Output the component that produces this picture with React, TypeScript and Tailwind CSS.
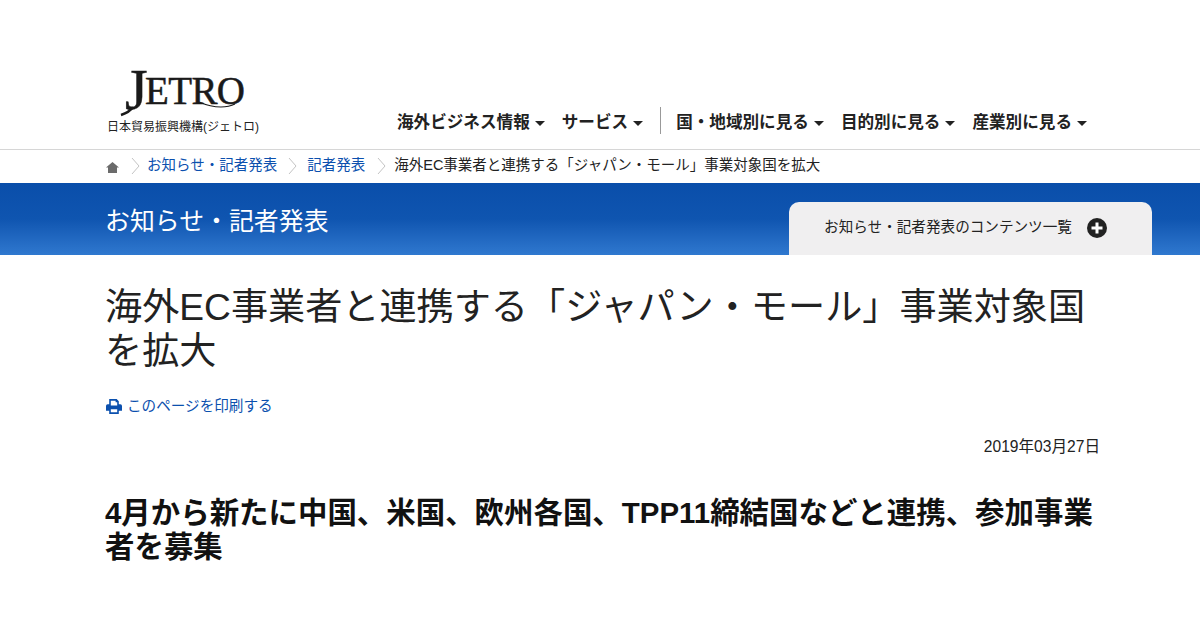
import React from "react";

const cjk = "font-['Liberation_Sans','Noto_Sans_CJK_JP',sans-serif]";

function Caret() {
  return <span className="ml-[5px] inline-block h-0 w-0 border-x-[5px] border-t-[5px] border-x-transparent border-t-[#222]" />;
}

function Chevron() {
  return (
    <svg width="9" height="18" viewBox="0 0 9 18" className="shrink-0">
      <path d="M1 1l7 8-7 8" fill="none" stroke="#c4c4c4" strokeWidth="1" />
    </svg>
  );
}

function NavItem({ label }: { label: string }) {
  return (
    <span className="flex items-center whitespace-nowrap text-[16.6px] font-bold leading-[24px] text-[#222]">
      {label}
      <Caret />
    </span>
  );
}

function Logo() {
  return (
    <svg width="140" height="50" viewBox="0 0 140 50" className="block overflow-visible">
      <g fill="#1a1a1a" stroke="#1a1a1a" strokeWidth="0.5" fontFamily="'Liberation Serif', serif">
        <text x="10" y="41" fontSize="58">J</text>
        <text x="30" y="36" fontSize="39" textLength="100" lengthAdjust="spacing">ETRO</text>
      </g>
      <path d="M18 39C16 42 12 45 6 47" fill="none" stroke="#1a1a1a" strokeWidth="2.500" />
      <path d="M84 34C91 37 98 39 106 39C112 39 116 38 120 36" fill="none" stroke="#1a1a1a" strokeWidth="1.200" />
    </svg>
  );
}

export default function App() {
  return (
    <div className={`h-[630px] w-[1200px] overflow-hidden bg-white ${cjk} text-[#222]`}>
      <header className="flex h-[150px] border-b border-[#d6d6d6] pl-[106px]">
        <div className="w-[291px] pt-[68px]">
          <div className="ml-[9px] h-[50px]">
            <Logo />
          </div>
          <div className="ml-px mt-[1px] whitespace-nowrap text-[12px] leading-[16px]">日本貿易振興機構(ジェトロ)</div>
        </div>
        <nav className="flex h-[149px] items-start pt-[107px]">
          <div className="flex h-[27px] items-center gap-[17px] pt-[5px]">
            <NavItem label="海外ビジネス情報" />
            <NavItem label="サービス" />
          </div>
          <div className="ml-[17px] mr-[15px] h-[27px] w-px bg-[#999]" />
          <div className="flex h-[27px] items-center gap-[17px] pt-[5px]">
            <NavItem label="国・地域別に見る" />
            <NavItem label="目的別に見る" />
            <NavItem label="産業別に見る" />
          </div>
        </nav>
      </header>

      <div className="flex h-[33px] items-center pb-[4px] pl-[106px] text-[14.500px] leading-[20px]">
        <svg width="13" height="11" viewBox="0 0 13 11" className="mt-[6px] shrink-0">
          <path d="M6.500 0L13 5.500H11V11H2V5.500H0L6.500 0Z" fill="#6b6b6b" />
        </svg>
        <span className="ml-[12px] mr-[7px] mt-[2px] flex"><Chevron /></span>
        <span className="text-[#0b50ae]">お知らせ・記者発表</span>
        <span className="ml-[11px] mr-[10px] mt-[2px] flex"><Chevron /></span>
        <span className="text-[#0b50ae]">記者発表</span>
        <span className="ml-[12px] mr-[8px] mt-[2px] flex"><Chevron /></span>
        <span className="whitespace-nowrap">海外EC事業者と連携する「ジャパン・モール」事業対象国を拡大</span>
      </div>

      <div className="flex h-[72px] items-start justify-between bg-gradient-to-b from-[#0a4eaa] via-[#0f55b0] to-[#2f78cf] pl-[105px] pr-[48px]">
        <div className="pt-[23px] text-[24.900px] leading-[30px] text-white">お知らせ・記者発表</div>
        <div className="mt-[19px] flex h-[53px] w-[363px] items-start justify-center gap-[15px] rounded-t-[10px] bg-[#f0eff0] pr-[10px] pt-[13px]">
          <span className="whitespace-nowrap text-[14.600px] leading-[24px]">お知らせ・記者発表のコンテンツ一覧</span>
          <svg width="20" height="20" viewBox="0 0 20 20" className="mt-[3px] shrink-0">
            <circle cx="10" cy="10" r="10" fill="#222" />
            <path d="M10 4.500v11M4.500 10h11" stroke="#fff" strokeWidth="3" />
          </svg>
        </div>
      </div>

      <main className="px-[105px]">
        <h1 className="whitespace-nowrap pt-[30px] text-[37.150px] font-normal leading-[44px] text-[#222]">
          海外EC事業者と連携する「ジャパン・モール」事業対象国
          <br />
          を拡大
        </h1>
        <div className="ml-px mt-[23px] flex items-center gap-[5px] text-[14.600px] leading-[20px] text-[#0b50ae]">
          <svg width="16" height="15" viewBox="0 0 15 14" className="shrink-0">
            <path d="M3 0h7l2 2v3h1.500A1.500 1.500 0 0 1 15 6.500V11h-3v3H3v-3H0V6.500A1.500 1.500 0 0 1 1.500 5H3V0Zm1.500 1.500V6h6V3H9V1.500H4.500ZM4.500 9.500v3h6v-3h-6Z" fill="#0b50ae" fillRule="evenodd" />
          </svg>
          このページを印刷する
        </div>
        <div className="-mr-[5px] mt-[21px] text-right text-[15.600px] leading-[20px] text-[#222]">2019年03月27日</div>
        <h2 className="mt-[39px] whitespace-nowrap text-[29.450px] font-bold leading-[34px] text-[#111]">
          4月から新たに中国、米国、欧州各国、TPP11締結国などと連携、参加事業
          <br />
          者を募集
        </h2>
      </main>
    </div>
  );
}
